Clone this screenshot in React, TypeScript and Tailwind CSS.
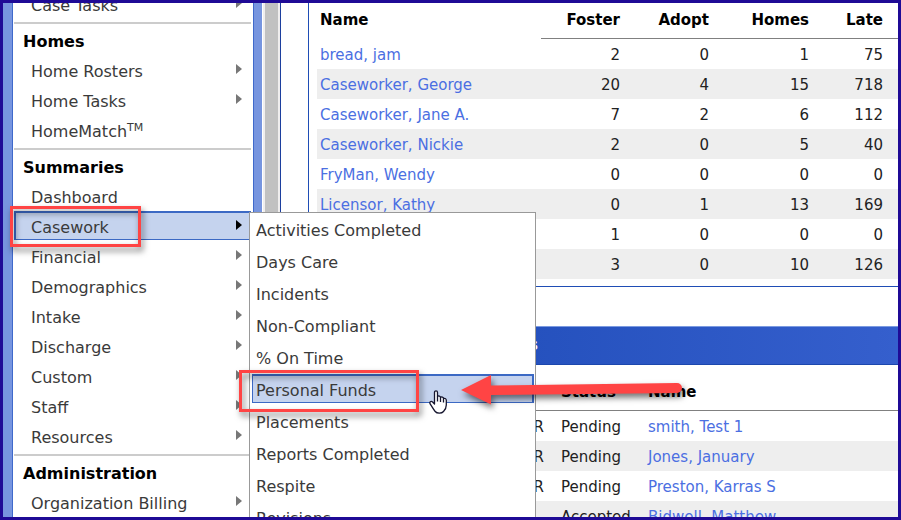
import type { ReactNode } from "react";

type Item = { label: ReactNode; id: string; arrow?: boolean; active?: boolean };
type Group = { title?: string; items: Item[] };

const groups: Group[] = [
  { items: [{ id: "case-tasks", label: "Case Tasks", arrow: true }] },
  {
    title: "Homes",
    items: [
      { id: "home-rosters", label: "Home Rosters", arrow: true },
      { id: "home-tasks", label: "Home Tasks", arrow: true },
      {
        id: "homematch",
        label: (
          <>
            HomeMatch<sup className="text-[11px]">TM</sup>
          </>
        ),
      },
    ],
  },
  {
    title: "Summaries",
    items: [
      { id: "dashboard", label: "Dashboard" },
      { id: "casework", label: "Casework", arrow: true, active: true },
      { id: "financial", label: "Financial", arrow: true },
      { id: "demographics", label: "Demographics", arrow: true },
      { id: "intake", label: "Intake", arrow: true },
      { id: "discharge", label: "Discharge", arrow: true },
      { id: "custom", label: "Custom", arrow: true },
      { id: "staff", label: "Staff", arrow: true },
      { id: "resources", label: "Resources", arrow: true },
    ],
  },
  {
    title: "Administration",
    items: [{ id: "organization-billing", label: "Organization Billing", arrow: true }],
  },
];

const flyoutItems = [
  "Activities Completed",
  "Days Care",
  "Incidents",
  "Non-Compliant",
  "% On Time",
  "Personal Funds",
  "Placements",
  "Reports Completed",
  "Respite",
  "Revisions",
];

const workers: [string, number, number, number, number][] = [
  ["bread, jam", 2, 0, 1, 75],
  ["Caseworker, George", 20, 4, 15, 718],
  ["Caseworker, Jane A.", 7, 2, 6, 112],
  ["Caseworker, Nickie", 2, 0, 5, 40],
  ["FryMan, Wendy", 0, 0, 0, 0],
  ["Licensor, Kathy", 0, 1, 13, 169],
  ["", 1, 0, 0, 0],
  ["", 3, 0, 10, 126],
];

const applicants: [string, string, string][] = [
  ["R", "Pending", "smith, Test 1"],
  ["R", "Pending", "Jones, January"],
  ["R", "Pending", "Preston, Karras S"],
  ["", "Accepted", "Bidwell, Matthew"],
];

function Caret({ dark }: { dark?: boolean }) {
  return (
    <svg width="6" height="10" viewBox="0 0 6 10" className="mb-[5px]" aria-hidden="true">
      <path d="M0 0L6 5L0 10Z" fill={dark ? "#000" : "#777"} />
    </svg>
  );
}

function Arrow() {
  return (
    <svg
      width="240"
      height="50"
      viewBox="0 0 240 50"
      className="pointer-events-none absolute top-[-9px] left-[202px] z-20 drop-shadow-[2px_4px_3px_rgba(0,0,0,0.55)]"
      aria-hidden="true"
    >
      <path
        d="M7 25L37 10V20.500L223 18A5 5 0 0 1 223 28L37 30V39.500Z"
        fill="#ff4444"
      />
    </svg>
  );
}

function HandCursor() {
  return (
    <svg
      width="18"
      height="24"
      viewBox="0 0 18 24"
      className="pointer-events-none absolute top-[16px] left-[177px] z-20"
      aria-hidden="true"
    >
      <path
        d="M5.500 14V2.500C5.500 0.300 8.500 0.300 8.500 2.500V6.500C9.500 5.500 11.500 6 11.500 7.500C12.500 6.500 14.500 7 14.500 8.500C15.500 8 17.300 8.500 17.300 10.200V15C17.300 18 16 20 14.500 21.500C12.500 23.800 8 23.600 6.200 21.500C4.500 19.500 3 16.500 1.200 14C0 12 2 10.700 3.600 12Z"
        fill="#fff"
        stroke="#15152e"
        strokeWidth="1.300"
        strokeLinejoin="round"
      />
      <path d="M8.500 6.500V11.500M11.500 7.500V12M14.500 8.500V12.500" stroke="#15152e" strokeWidth="1.300" />
    </svg>
  );
}

function Flyout() {
  return (
    <ul className="absolute top-px left-[235px] z-10 w-[287px] border border-[#999] bg-white px-px pt-px pb-2">
      {flyoutItems.map((label) => {
        const active = label === "Personal Funds";
        return (
          <li key={label} className="relative mb-[3px] ml-px">
            <a
              href="#"
              className={`flex h-[29px] items-center border-t-2 border-r-2 border-b border-l pt-[4px] pl-[3px] ${
                active ? "border-[#3c69c4] bg-[#c5d3ee]" : "border-transparent"
              }`}
            >
              {label}
            </a>
            {active && (
              <>
                <span className="pointer-events-none absolute -top-1 -left-[13px] h-[42px] w-[180px] border-3 border-[#ff4444] drop-shadow-[2px_4px_3px_rgba(0,0,0,0.55)]" />
                <HandCursor />
                <Arrow />
              </>
            )}
          </li>
        );
      })}
    </ul>
  );
}

function Sidebar() {
  return (
    <nav className="w-[240px] shrink-0 pr-[2px] pl-px text-[16px] text-[#3a3a3a]">
      <div className="-mt-[14px]">
        {groups.map((group, i) => (
          <section key={group.title ?? "cases"}>
            {i > 0 && <hr className="mt-[3px] mb-px border-t-2 border-[#ccc]" />}
            {group.title && (
              <h2 className="flex h-[30px] items-center pt-[4px] pl-[9px] font-bold text-black">
                {group.title}
              </h2>
            )}
            <ul>
              {group.items.map((item) => (
                <li key={item.id} className="relative h-[30px]">
                  <a
                    href="#"
                    className={`flex h-[29px] items-center justify-between border-t-2 border-b border-l-2 pt-[3px] pr-[9px] pl-[15px] ${
                      item.active ? "border-[#3c69c4] bg-[#c5d3ee]" : "border-transparent"
                    }`}
                  >
                    <span>{item.label}</span>
                    {item.arrow && <Caret dark={item.active} />}
                  </a>
                  {item.active && (
                    <>
                      <span className="pointer-events-none absolute -top-[5px] -left-1 h-[41px] w-[131px] border-3 border-[#ff4444] drop-shadow-[2px_4px_3px_rgba(0,0,0,0.55)]" />
                      <Flyout />
                    </>
                  )}
                </li>
              ))}
            </ul>
          </section>
        ))}
      </div>
    </nav>
  );
}

function WorkersPanel() {
  return (
    <section className="border-b border-l border-[#1f4db5] pb-[7px] pl-2">
      <table className="w-full table-fixed border-collapse text-right">
        <colgroup>
          <col />
          <col className="w-[94px]" />
          <col className="w-[89px]" />
          <col className="w-[100px]" />
          <col className="w-[74px]" />
        </colgroup>
        <thead>
          <tr className="h-9 text-black">
            <th className="pb-px pl-[3px] text-left">Name</th>
            {["Foster", "Adopt", "Homes", "Late"].map((h) => (
              <th key={h} className="pr-[15px] pb-px shadow-[inset_0_-1px_#808080]">
                {h}
              </th>
            ))}
          </tr>
        </thead>
        <tbody>
          {workers.map(([name, ...counts], i) => (
            <tr key={i} className="h-[30px] even:bg-[#eee]">
              <td className="pt-[2px] pl-[3px] text-left">
                <a href="#" className="text-[#4b6fe2]">
                  {name}
                </a>
              </td>
              {counts.map((n, c) => (
                <td key={c} className="pt-[2px] pr-[15px]">
                  {n}
                </td>
              ))}
            </tr>
          ))}
        </tbody>
      </table>
    </section>
  );
}

function ApplicantsPanel() {
  return (
    <section className="mt-[39px] border-l border-[#1f4db5]">
      <h2 className="flex h-[39px] items-center border-t border-b border-t-[#7b9ae0] border-b-[#1c47ad] bg-linear-to-r from-[#1b49b5] to-[#355fcd] pl-[220px] font-bold text-white">
        s
      </h2>
      <div className="pt-[7px] pl-2">
        <table className="w-full table-fixed border-collapse text-left">
          <colgroup>
            <col className="w-[244px]" />
            <col className="w-[87px]" />
            <col />
          </colgroup>
          <thead>
            <tr className="h-[39px] text-black shadow-[inset_0_-1px_#808080]">
              <th />
              <th className="pt-[2px]">Status</th>
              <th className="pt-[2px]">Name</th>
            </tr>
          </thead>
          <tbody>
            {applicants.map(([state, status, name]) => (
              <tr key={name} className="h-[30px] even:bg-[#eee]">
                <td className="pt-[2px] pr-[17px] text-right">{state}</td>
                <td className="pt-[2px]">{status}</td>
                <td className="pt-[2px]">
                  <a href="#" className="text-[#4b6fe2]">
                    {name}
                  </a>
                </td>
              </tr>
            ))}
          </tbody>
        </table>
      </div>
    </section>
  );
}

export default function App() {
  return (
    <div className="relative flex h-screen overflow-hidden border-3 border-[#1f0a96] bg-white font-['DejaVu_Sans',Verdana,sans-serif]">
      <div className="w-[10px] shrink-0 border-r border-[#3f69cb] bg-[#7795df]" />
      <Sidebar />
      <div className="w-[9px] shrink-0 border-l border-[#3f69cb] bg-[#7795df]" />
      <div className="ml-px w-[17px] shrink-0 border-x-2 border-[#f0eeee] bg-[#c1c1c1]" />
      <main className="min-w-0 flex-1 border-l border-[#1c3f9e] pl-[27px] text-[15px] text-[#222]">
        <WorkersPanel />
        <ApplicantsPanel />
      </main>
    </div>
  );
}
